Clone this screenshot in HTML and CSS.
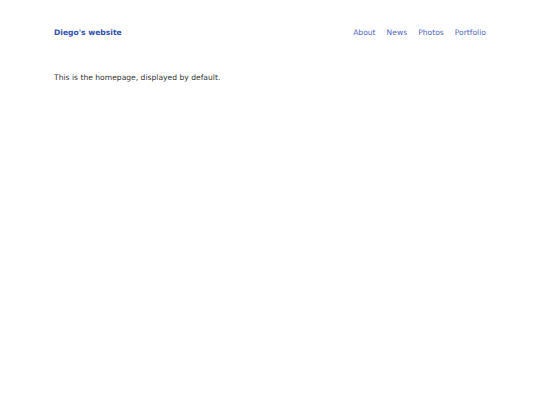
FILE: index.html
```html
<!DOCTYPE html>
<html lang="en">
<head>
    <meta charset="UTF-8">
    <meta name="viewport" content="width=device-width, initial-scale=1.0">
    <title>Diego's website</title>
    <link rel="stylesheet" href="styles.css">
</head>
<body>
    <div class="page">
        <header class="site-header">
            <a class="site-title" href="#">Diego's website</a>
            <nav class="site-nav">
                <a href="#">About</a>
                <a href="#">News</a>
                <a href="#">Photos</a>
                <a href="#">Portfolio</a>
            </nav>
        </header>
        <main class="content">
            <p>This is the homepage, displayed by default.</p>
        </main>
    </div>
</body>
</html>
```

FILE: styles.css
```css
/* Global Styles */
body {
    font-family: 'DejaVu Sans', Verdana, sans-serif;
    font-size: 7.6px;
    color: #333;
    background: #fff;
    margin: 0;
    padding: 0;
}

.page {
    padding: 27px 54px;
}

.site-header {
    display: flex;
    justify-content: space-between;
    align-items: center;
    height: 11px;
}

.site-title {
    color: #2f4fb0;
    font-weight: bold;
    text-decoration: none;
}

.site-nav {
    display: flex;
    gap: 11px;
}

.site-nav a {
    color: #5068c0;
    text-decoration: none;
}

.content {
    margin-top: 35px;
}

.content p {
    margin: 0;
}
```
